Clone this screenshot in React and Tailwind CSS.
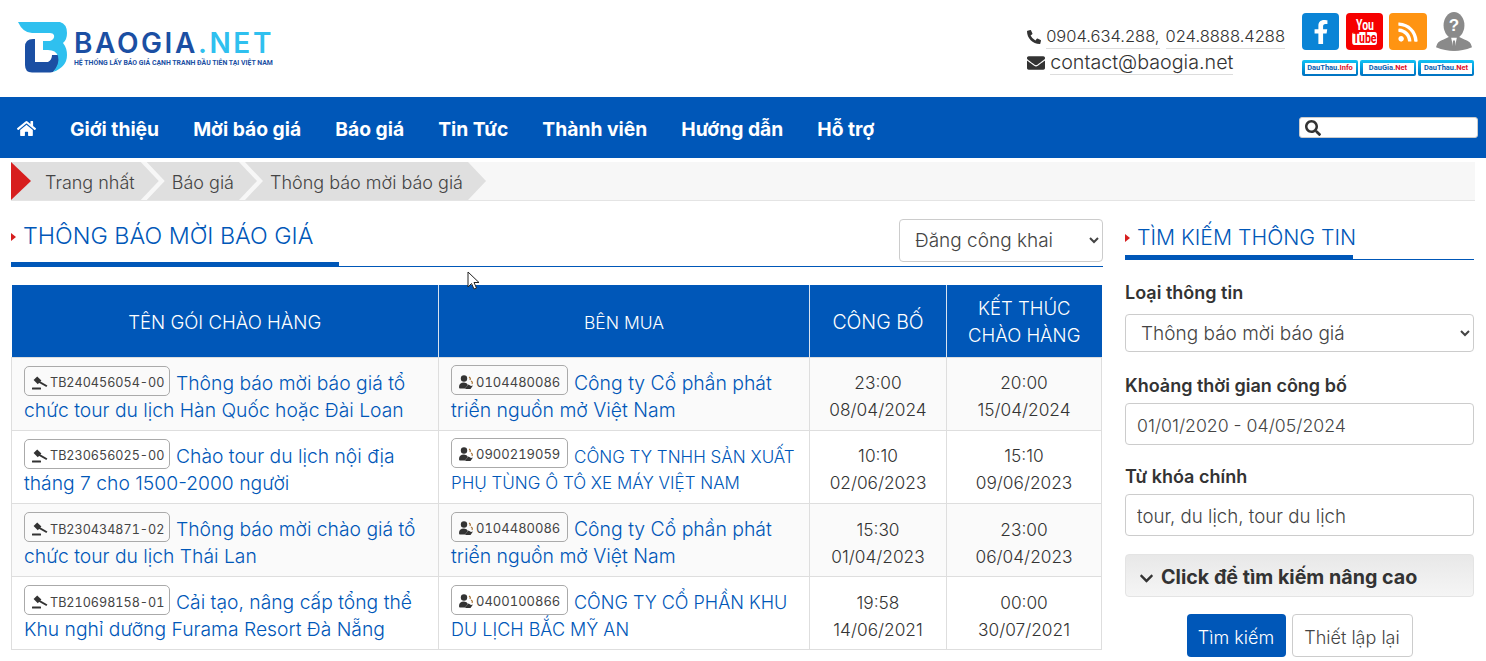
import { FaPhoneAlt, FaEnvelope, FaHome, FaSearch, FaFacebookF, FaRss, FaChevronDown } from "react-icons/fa";

const menu = ["Giới thiệu", "Mời báo giá", "Báo giá", "Tin Tức", "Thành viên", "Hướng dẫn", "Hỗ trợ"];

const rows = [
  { code: "TB240456054-00", title: "Thông báo mời báo giá tổ chức tour du lịch Hàn Quốc hoặc Đài Loan", tax: "0104480086", buyer: "Công ty Cổ phần phát triển nguồn mở Việt Nam", buyerCls: "text-[19.4px]", pubTime: "23:00", pubDate: "08/04/2024", endTime: "20:00", endDate: "15/04/2024" },
  { code: "TB230656025-00", title: "Chào tour du lịch nội địa tháng 7 cho 1500-2000 người", tax: "0900219059", buyer: "CÔNG TY TNHH SẢN XUẤT PHỤ TÙNG Ô TÔ XE MÁY VIỆT NAM", buyerCls: "text-[17px]", pubTime: "10:10", pubDate: "02/06/2023", endTime: "15:10", endDate: "09/06/2023" },
  { code: "TB230434871-02", title: "Thông báo mời chào giá tổ chức tour du lịch Thái Lan", tax: "0104480086", buyer: "Công ty Cổ phần phát triển nguồn mở Việt Nam", buyerCls: "text-[19.4px]", pubTime: "15:30", pubDate: "01/04/2023", endTime: "23:00", endDate: "06/04/2023" },
  { code: "TB210698158-01", title: "Cải tạo, nâng cấp tổng thể Khu nghỉ dưỡng Furama Resort Đà Nẵng", tax: "0400100866", buyer: "CÔNG TY CỔ PHẦN KHU DU LỊCH BẮC MỸ AN", buyerCls: "text-[18px]", pubTime: "19:58", pubDate: "14/06/2021", endTime: "00:00", endDate: "30/07/2021" },
];

function GavelIcon() {
  return (
    <svg width="17" height="14" viewBox="0 0 17 14" className="mr-[2px] shrink-0" fill="#333">
      <path d="M6.2 0.4 L10.4 4.6 L6.8 8.2 L2.6 4 Z" />
      <path d="M8.6 5 L16.4 9.4 L15.4 11 L7.4 6.4 Z" />
      <rect x="1" y="11.4" width="9" height="2.1" rx="0.5" />
    </svg>
  );
}

function BuyerIcon() {
  return (
    <svg width="16" height="15" viewBox="0 0 16 15" className="mr-[2px] shrink-0">
      <circle cx="6" cy="3.5" r="3.2" fill="#333" />
      <path d="M1 12 Q1 7.5 6 7.5 Q9 7.5 10 10 L7 13.5 H2 Q1 13.5 1 12 Z" fill="#333" />
      <path d="M11 2 Q13 3 12 5 M13 6 Q15 7 14 9" stroke="#a8763a" strokeWidth="1.2" fill="none" />
      <path d="M7 13.5 L10.5 9.5 L13 11 L15 10.5 L12.5 14 H8 Z" fill="#333" />
    </svg>
  );
}

function Logo() {
  return (
    <div className="flex items-start">
      <svg width="50" height="51" viewBox="0 0 50 51" className="shrink-0">
        <path d="M7 25 Q7 17 15 17 H17 V40 H30 Q34 38 34 33 L41 33 Q43 43 35 50 Q32 50.5 30 50.5 H14 Q7 50.5 7 43 Z" fill="#1b4fa3" />
        <path d="M0 0 H42 Q49 2 49 11 Q49 18 45 21 Q49 26 49 33 Q49 45 35 50 Q42 42 40 34 Q38 28 30 28 H25 V19 H32 Q37 17 36 13 Q35 11 32 11 H14 Q5 11 0 0 Z" fill="#2fc0ef" />
      </svg>
      <div className="ml-[6px] pt-[7px] w-[210px]">
        <div className="text-[28px] leading-[28px] tracking-[2.6px] font-semibold">
          <span className="text-[#1b4fa3]">BAOGIA</span>
          <span className="text-[#2fc0ef]">.NET</span>
        </div>
        <div className="mt-[2px] text-[6.9px] leading-[9px] font-bold text-[#1b4fa3] font-['Roboto',sans-serif] whitespace-nowrap">HỆ THỐNG LẤY BÁO GIÁ CẠNH TRANH ĐẦU TIÊN TẠI VIỆT NAM</div>
      </div>
    </div>
  );
}

function SiteBadge({ name, suffix }) {
  return (
    <div className="w-[56px] h-[16px] rounded-[2px] bg-gradient-to-b from-[#14c3f5] to-[#0070c0] p-[2.5px] flex">
      <div className="flex-1 bg-white flex items-center justify-center text-[7.5px] font-bold leading-none font-['Roboto',sans-serif] whitespace-nowrap">
        <span className="text-[#0a5fb0]">{name}</span>
        <span className="text-[#e0102a]">{suffix}</span>
      </div>
    </div>
  );
}

function Header() {
  return (
    <header className="h-[97px] flex bg-white pl-[18px] pr-[12px] pt-[22px]">
      <Logo />
      <div className="ml-auto flex">
        <div className="pt-[2px] leading-[27px] font-light text-[#333]">
          <div className="flex items-center text-[16.5px]">
            <FaPhoneAlt className="text-[14px] text-[#333] mr-[5px]" />
            <span className="border-b border-[#ddd] leading-[24px]">0904.634.288,</span>
            <span className="border-b border-[#ddd] leading-[24px] ml-[6px]">024.8888.4288</span>
          </div>
          <div className="flex items-center mt-[1px] text-[19.7px]">
            <FaEnvelope className="text-[18px] mr-[5px]" />
            <span className="border-b border-[#ddd] leading-[24px]">contact@baogia.net</span>
          </div>
        </div>
        <div className="w-[172px] ml-[17px] -mt-[9px]">
          <div className="flex items-start">
            <div className="w-[37px] h-[37px] rounded-[4px] bg-[#0a84d6] flex items-center justify-center text-white text-[24px]"><FaFacebookF /></div>
            <div className="w-[37px] h-[37px] rounded-[4px] bg-[#f60000] ml-[7px] flex flex-col items-center justify-center text-white font-bold leading-[13px] text-[14px] font-['Roboto',sans-serif]">
              <span className="scale-x-[0.75]">You</span>
              <span className="bg-white text-[#f60000] rounded-[3px] px-[1px] scale-x-[0.75]">Tube</span>
            </div>
            <div className="w-[38px] h-[37px] rounded-[4px] bg-[#ff9412] ml-[6px] flex items-center justify-center text-white text-[22px]"><FaRss /></div>
            <svg width="36" height="40" viewBox="0 0 38 42" className="ml-[9px] -mt-px">
              <path d="M0 37 Q1 31 8 29 L14 26 H24 L30 29 Q37 31 38 37 Q28 41 19 41 Q10 41 0 37 Z" fill="#8a8a8a" />
              <ellipse cx="19" cy="14" rx="11" ry="14" fill="#8a8a8a" />
              <path d="M16 27 L19 41 L22 27 Z" fill="#fff" />
              <path d="M18 30 H20 L21 39 L19 41 L17 39 Z" fill="#8a8a8a" />
              <text x="19" y="20" textAnchor="middle" fontSize="18" fontWeight="700" fill="#fff" fontFamily="Liberation Sans, sans-serif">?</text>
            </svg>
          </div>
          <div className="flex gap-[2px] mt-[8px]">
            <SiteBadge name="DauThau." suffix="Info" />
            <SiteBadge name="DauGia." suffix="Net" />
            <SiteBadge name="DauThau." suffix="Net" />
          </div>
        </div>
      </div>
    </header>
  );
}

function Nav() {
  return (
    <nav className="h-[61px] bg-[#0057b8] flex items-center pl-[17px] pr-[8px]">
      <FaHome className="text-white text-[19px] mr-[34px] mt-[2px]" />
      <ul className="flex gap-[34px] mt-[3px] text-white text-[19.3px] font-bold">
        {menu.map((m) => <li key={m}>{m}</li>)}
      </ul>
      <div className="ml-auto w-[179px] h-[21px] bg-white rounded-[3px] border border-[#ccc] flex items-center pl-[5px] text-[#333] text-[16px]">
        <FaSearch />
      </div>
    </nav>
  );
}

function Breadcrumb() {
  const Crumb = ({ children, first }) => (
    <li className={`h-[38px] pt-[2px] bg-[#dfdfdf] flex items-center ${first ? "pl-[34px] pr-[24px] [clip-path:polygon(0_0,calc(100%-18px)_0,100%_50%,calc(100%-18px)_100%,0_100%)]" : "-ml-[12px] pl-[25px] pr-[23px] [clip-path:polygon(0_0,calc(100%-18px)_0,100%_50%,calc(100%-18px)_100%,0_100%,18px_50%)]"}`}>
      {children}
    </li>
  );
  return (
    <div className="mx-[11px] mt-[4px] h-[39px] bg-[#f7f7f7] border-b border-[#e4e4e4] relative text-[18px] font-light text-[#444]">
      <ul className="flex">
        <Crumb first>Trang nhất</Crumb>
        <Crumb>Báo giá</Crumb>
        <Crumb>Thông báo mời báo giá</Crumb>
      </ul>
      <div className="absolute left-0 top-0 w-[20px] h-[38px] bg-[#d71e1e] [clip-path:polygon(0_0,100%_50%,0_100%)]" />
    </div>
  );
}

function PanelTitle({ children, barClass }) {
  return (
    <h2 className={`leading-[32px] font-light text-[#0057b8] flex items-start border-b-4 border-[#0057b8] whitespace-nowrap ${barClass}`}>
      <span className="w-0 h-0 border-y-[4px] border-y-transparent border-l-[5px] border-l-[#d71e1e] mr-[7px] mt-[13px]" />
      {children}
    </h2>
  );
}

function Badge({ width, children }) {
  return (
    <span className={`inline-flex items-center h-[30px] -my-[5px] pt-[4px] border border-[#aaa] rounded-[5px] pl-[6px] font-normal tabular-nums whitespace-nowrap text-[#444] mr-[6px] ${width}`}>
      {children}
    </span>
  );
}

function Table() {
  return (
    <table className="w-[1091px] mt-[18px] border-collapse table-fixed leading-[27px] font-light">
      <thead>
        <tr className="bg-[#0057b8] text-white text-center h-[72px]">
          <th className="w-[427px] pt-[3px] font-light text-[18.6px] border-r border-[#d8e3f0]">TÊN GÓI CHÀO HÀNG</th>
          <th className="w-[371px] pt-[3px] font-light text-[17.5px] border-r border-[#d8e3f0]">BÊN MUA</th>
          <th className="w-[137px] pt-[3px] font-light text-[19.5px] border-r border-[#d8e3f0]">CÔNG BỐ</th>
          <th className="pt-[3px] font-light text-[18.5px]">KẾT THÚC<br />CHÀO HÀNG</th>
        </tr>
      </thead>
      <tbody>
        {rows.map((r, i) => (
          <tr key={r.code} className={`h-[73px] ${i % 2 === 0 ? "bg-[#fafafa]" : "bg-white"}`}>
            <td className="border border-[#dedede] px-[12px] pt-[12px] pb-[6px] text-[19.3px]">
              <Badge width="w-[146px]">
                <GavelIcon />
                <span className="text-[12.6px]">{r.code}</span>
              </Badge>
              <a className="text-[#0057b8]">{r.title}</a>
            </td>
            <td className={`border border-[#dedede] px-[12px] pt-[12px] pb-[6px] ${r.buyerCls}`}>
              <Badge width="w-[117px]">
                <BuyerIcon />
                <span className="text-[13px]">{r.tax}</span>
              </Badge>
              <a className="text-[#0057b8]">{r.buyer}</a>
            </td>
            <td className="border border-[#dedede] pt-[5px] text-center text-[17.3px] text-[#333]">{r.pubTime}<br />{r.pubDate}</td>
            <td className="border border-[#dedede] pt-[5px] text-center text-[17.3px] text-[#333]">{r.endTime}<br />{r.endDate}</td>
          </tr>
        ))}
      </tbody>
    </table>
  );
}

function Field({ label, children }) {
  return (
    <div className="mb-[18px]">
      <label className="block text-[18px] leading-[27px] font-semibold text-[#333] mb-[4px]">{label}</label>
      {children}
    </div>
  );
}

function Sidebar() {
  const inputCls = "w-full h-[42px] pt-[3px] border border-[#ccc] rounded-[4px] bg-white px-[11px] font-light text-[#444]";
  return (
    <aside className="w-[349px] shrink-0">
      <div className="border-b border-[#0057b8]">
        <PanelTitle barClass="w-[228px] h-[42px] text-[21.2px] pt-[4px]">TÌM KIẾM THÔNG TIN</PanelTitle>
      </div>
      <div className="mt-[19px]">
        <Field label="Loại thông tin">
          <select className="w-full h-[38px] mt-[4px] mb-[2px] border border-[#ccc] rounded-[4px] bg-white px-[11px] text-[19px] font-light text-[#444]" defaultValue="a"><option value="a">Thông báo mời báo giá</option></select>
        </Field>
        <Field label="Khoảng thời gian công bố">
          <input className={`${inputCls} text-[17.7px]`} defaultValue="01/01/2020 - 04/05/2024" />
        </Field>
        <Field label="Từ khóa chính">
          <input className={`${inputCls} text-[18.7px]`} defaultValue="tour, du lịch, tour du lịch" />
        </Field>
        <div className="h-[43px] pt-[5px] rounded-[4px] border border-[#e4e4e4] bg-gradient-to-b from-[#e8e8e8] to-[#f5f5f5] flex items-center pl-[13px] text-[19.7px] font-bold text-[#333]">
          <FaChevronDown className="text-[15px] mr-[7px]" />
          Click để tìm kiếm nâng cao
        </div>
        <div className="flex justify-center gap-[6px] mt-[17px] text-[18px] font-light">
          <button className="h-[43px] pt-[4px] w-[99px] rounded-[4px] bg-[#0057b8] text-white">Tìm kiếm</button>
          <button className="h-[43px] pt-[4px] w-[121px] rounded-[4px] border border-[#ccc] bg-white text-[#444]">Thiết lập lại</button>
        </div>
      </div>
    </aside>
  );
}

export default function App() {
  return (
    <div className="relative h-[661px] overflow-hidden bg-white font-['Inter',sans-serif] text-[#333]">
      <Header />
      <Nav />
      <Breadcrumb />
      <main className="flex gap-[22px] px-[11px] pt-[16px]">
        <section className="w-[1092px] shrink-0">
          <div className="flex items-start border-b border-[#0057b8] h-[50px]">
            <PanelTitle barClass="w-[328px] h-[49px] text-[23.3px] pt-[3px]">THÔNG BÁO MỜI BÁO GIÁ</PanelTitle>
            <select className="ml-auto mt-[2px] w-[204px] h-[43px] border border-[#ccc] rounded-[4px] bg-white px-[11px] text-[19px] font-light text-[#444]" defaultValue="a">
              <option value="a">Đăng công khai</option>
            </select>
          </div>
          <Table />
        </section>
        <Sidebar />
      </main>
      <svg width="14" height="20" viewBox="0 0 14 20" className="absolute left-[467px] top-[271px]">
        <path d="M1 1 V16 L4.5 12.5 L7 18 L9.5 17 L7 11.5 H12 Z" fill="#fff" stroke="#222" strokeWidth="1" />
      </svg>
    </div>
  );
}
